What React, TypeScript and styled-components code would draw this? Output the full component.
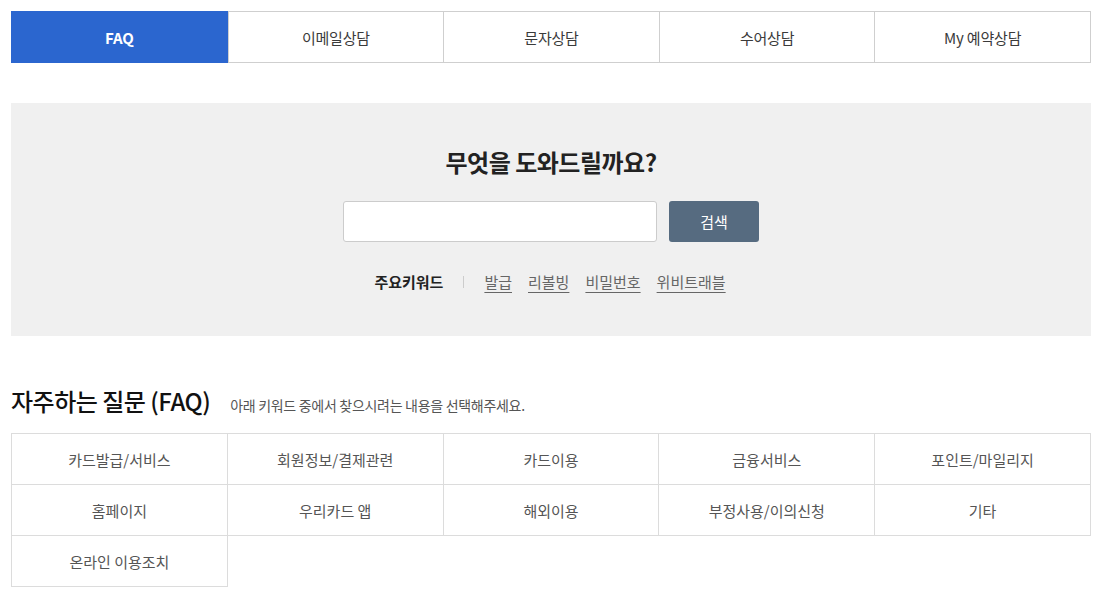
import React from "react";
import styled, { createGlobalStyle } from "styled-components";

const tabs = ["FAQ", "이메일상담", "문자상담", "수어상담", "My 예약상담"];
const keywords = ["발급", "리볼빙", "비밀번호", "위비트래블"];
const categories = [
    "카드발급/서비스",
    "회원정보/결제관련",
    "카드이용",
    "금융서비스",
    "포인트/마일리지",
    "홈페이지",
    "우리카드 앱",
    "해외이용",
    "부정사용/이의신청",
    "기타",
    "온라인 이용조치",
];

const App: React.FC = () => {
    return (
        <Page>
            <GlobalStyle/>
            <TabBar>
                {tabs.map((t, i) => (
                    <Tab key={t} active={i === 0}>{t}</Tab>
                ))}
            </TabBar>
            <SearchBox>
                <SearchTitle>무엇을 도와드릴까요?</SearchTitle>
                <SearchRow>
                    <SearchInput type="text"/>
                    <SearchButton>검색</SearchButton>
                </SearchRow>
                <KeywordRow>
                    <KeywordLabel>주요키워드</KeywordLabel>
                    <Divider/>
                    {keywords.map((k) => (
                        <Keyword key={k} href="#">{k}</Keyword>
                    ))}
                </KeywordRow>
            </SearchBox>
            <SectionHead>
                <SectionTitle>자주하는 질문 (FAQ)</SectionTitle>
                <SectionDesc>아래 키워드 중에서 찾으시려는 내용을 선택해주세요.</SectionDesc>
            </SectionHead>
            <CategoryGrid>
                {categories.map((c) => (
                    <Category key={c}>{c}</Category>
                ))}
            </CategoryGrid>
        </Page>
    )
}

const GlobalStyle = createGlobalStyle`
  body {
    margin: 0;
    background: #fff;
    font-family: "Noto Sans CJK KR", "Noto Sans", sans-serif;
    color: #222;
  }
`

const Page = styled.div`
  width: 1080px;
  padding: 11px 0 0 11px;
`

const TabBar = styled.div`
  display: grid;
  grid-template-columns: repeat(5, 1fr);
  border: 1px solid #cfcfcf;
  height: 50px;
`

const Tab = styled.div<{ active?: boolean }>`
  display: flex;
  align-items: center;
  justify-content: center;
  font-size: 15px;
  letter-spacing: -0.2px;
  color: ${(p) => (p.active ? "#fff" : "#3a3a3a")};
  background: ${(p) => (p.active ? "#2b66cf" : "#fff")};
  font-weight: ${(p) => (p.active ? 700 : 400)};
  border-left: 1px solid #cfcfcf;
  margin: ${(p) => (p.active ? "-1px 0 -1px -1px" : "0")};

  &:first-child {
    border-left: none;
  }
`

const SearchBox = styled.div`
  margin-top: 40px;
  height: 233px;
  background: #f0f0f0;
  display: flex;
  flex-direction: column;
  align-items: center;
  padding-top: 42px;
  box-sizing: border-box;
`

const SearchTitle = styled.h2`
  margin: 0;
  font-size: 24px;
  font-weight: 700;
  color: #222;
  letter-spacing: -0.5px;
  line-height: 34px;
`

const SearchRow = styled.div`
  display: flex;
  gap: 12px;
  margin-top: 22px;
`

const SearchInput = styled.input`
  width: 314px;
  height: 41px;
  box-sizing: border-box;
  border: 1px solid #cccccc;
  border-radius: 3px;
  background: #fff;
  outline: none;
`

const SearchButton = styled.button`
  width: 90px;
  height: 41px;
  border: none;
  border-radius: 3px;
  background: #566b80;
  color: #fff;
  font-family: inherit;
  font-size: 15px;
`

const KeywordRow = styled.div`
  display: flex;
  align-items: center;
  margin-top: 29px;
  margin-left: 14px;
  font-size: 15px;
`

const KeywordLabel = styled.span`
  font-weight: 700;
  color: #222;
`

const Divider = styled.span`
  width: 1px;
  height: 12px;
  background: #cccccc;
  margin: 0 20px;
`

const Keyword = styled.a`
  color: #666;
  text-decoration: underline;
  text-underline-offset: 4px;
  margin-right: 16px;
`

const SectionHead = styled.div`
  display: flex;
  align-items: baseline;
  margin-top: 47px;
  gap: 20px;
`

const SectionTitle = styled.h3`
  margin: 0;
  font-size: 24px;
  font-weight: 500;
  color: #111;
  letter-spacing: -0.5px;
`

const SectionDesc = styled.span`
  font-size: 14px;
  color: #555;
  letter-spacing: -0.3px;
`

const CategoryGrid = styled.div`
  margin-top: 15px;
  display: grid;
  grid-template-columns: repeat(5, 1fr);
  border-top: 1px solid #dcdcdc;
  border-left: 1px solid #dcdcdc;
`

const Category = styled.div`
  height: 50px;
  display: flex;
  align-items: center;
  justify-content: center;
  border-right: 1px solid #dcdcdc;
  border-bottom: 1px solid #dcdcdc;
  font-size: 15px;
  color: #555;
`

export default App;
